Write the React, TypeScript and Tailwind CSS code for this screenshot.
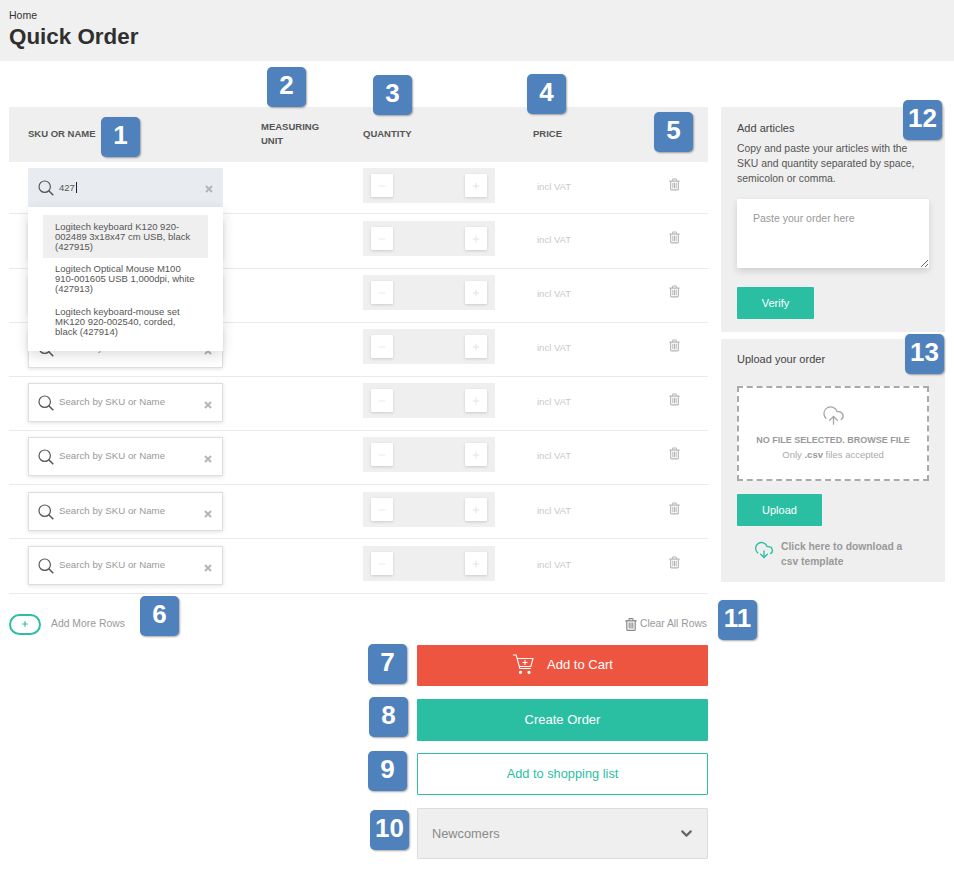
import { Fragment } from 'react'
import { ChevronDown, CloudDownload, CloudUpload, Minus, Plus } from 'lucide-react'

const rows = [
  { h: 'h-[52px] pt-[6px]', active: true },
  { h: 'h-[55px] pt-[7px]' },
  { h: 'h-[54px] pt-[6px]' },
  { h: 'h-[54px] pt-[6px]' },
  { h: 'h-[54px] pt-[6px]' },
  { h: 'h-[54px] pt-[6px]' },
  { h: 'h-[54px] pt-[7px]' },
  { h: 'h-[55px] pt-[7px]' },
]

const badges = [
  { n: '1', c: 'left-[101px] top-[117px]' },
  { n: '2', c: 'left-[267px] top-[67px]' },
  { n: '3', c: 'left-[373px] top-[75px]' },
  { n: '4', c: 'left-[527px] top-[74px]' },
  { n: '5', c: 'left-[654px] top-[112px]' },
  { n: '6', c: 'left-[140px] top-[596px]' },
  { n: '7', c: 'left-[368px] top-[644px]' },
  { n: '8', c: 'left-[369px] top-[697px]' },
  { n: '9', c: 'left-[368px] top-[751px]' },
  { n: '10', c: 'left-[370px] top-[810px]' },
  { n: '11', c: 'left-[718px] top-[600px]' },
  { n: '12', c: 'left-[903px] top-[100px]' },
  { n: '13', c: 'left-[905px] top-[334px]' },
]

const results = [
  { lines: ['Logitech keyboard K120 920-', '002489 3x18x47 cm USB, black', '(427915)'], c: 'bg-[#efefef] h-[43px] pt-[7px]' },
  { lines: ['Logitech Optical Mouse M100', '910-001605 USB 1,000dpi, white', '(427913)'], c: 'h-[43px] pt-[6px]' },
  { lines: ['Logitech keyboard-mouse set', 'MK120 920-002540, corded,', 'black (427914)'], c: 'h-[43px] pt-[6px]' },
]

function TrashIcon({ className }: { className: string }) {
  return (
    <svg viewBox="0 0 12 13" fill="none" stroke="currentColor" className={className}>
      <path d="M.3 2.8h11.4" strokeWidth="1.3" />
      <path d="M4 2.6V1.2c0-.4.2-.6.6-.6h2.8c.4 0 .6.2.6.6v1.4" strokeWidth="1.1" />
      <path d="M1.8 3v8.4c0 .6.4 1 1 1h6.4c.6 0 1-.4 1-1V3" strokeWidth="1.2" />
      <path d="M4.2 4.6v6M6 4.6v6M7.8 4.6v6" strokeWidth="1.1" />
    </svg>
  )
}

function SearchBox({ active }: { active?: boolean }) {
  return (
    <div className={active
      ? 'relative flex items-center w-[195px] h-[39px] pl-[10px] bg-[#e8ebef]'
      : 'relative flex items-center w-[195px] h-[39px] pl-[9px] bg-white border border-[#dedede] shadow-[0_1px_4px_rgba(0,0,0,0.12)]'}>
      <svg viewBox="0 0 16 16" fill="none" stroke="#555" strokeWidth="1.2" className="w-[16px] h-[16px] shrink-0">
        <circle cx="6.7" cy="6.7" r="5.7" />
        <path d="M10.8 10.8 15.3 15.3" strokeWidth="1.5" />
      </svg>
      {active
        ? <span className="ml-[5px] -mt-[1px] text-[9.5px] text-[#555] border-r border-[#222] pr-[1px] leading-[11px]">427</span>
        : <span className="ml-[5px] text-[9.7px] text-[#999]">Search by SKU or Name</span>}
      <span className="absolute right-[10px] top-[17px] text-[#b5b5b5]">
        <svg viewBox="0 0 8 8" stroke="currentColor" strokeWidth="2" className="w-[8px] h-[8px]">
          <path d="M1 1l6 6M7 1 1 7" />
        </svg>
      </span>
    </div>
  )
}

function QtyButton({ children }: { children: React.ReactNode }) {
  return (
    <div className="flex items-center justify-center w-[22px] h-[23px] bg-white rounded-[1px] shadow-[0_1px_3px_rgba(0,0,0,0.15)] text-[#e3e4e8]">
      {children}
    </div>
  )
}

function Row({ h, active }: { h: string; active?: boolean }) {
  return (
    <div className={`flex border-b border-[#eaeaea] ${h}`}>
      <div className="w-[252px] pl-[19px]">
        <SearchBox active={active} />
      </div>
      <div className="w-[102px]" />
      <div className="w-[170px]">
        <div className="flex items-center justify-between w-[132px] h-[35px] px-[8px] bg-[#efefef]">
          <QtyButton><Minus size={10} strokeWidth={2} /></QtyButton>
          <QtyButton><Plus size={10} strokeWidth={2.5} /></QtyButton>
        </div>
      </div>
      <div className="flex-1 flex justify-between pl-[4px] pr-[28px]">
        <span className="mt-[13px] text-[9.5px] leading-[11px] text-[#c8c8c8]">incl VAT</span>
        <TrashIcon className="w-[11px] h-[13px] mt-[10px] text-[#b4b4b4]" />
      </div>
    </div>
  )
}

export default function App() {
  return (
    <div className="relative w-[954px] h-[870px] overflow-hidden bg-white font-['Liberation_Sans',Arial,sans-serif] text-[#444]">
      <header className="h-[61px] bg-[#f0f0f0] px-[9px] pt-[9px]">
        <div className="text-[10.5px] leading-[12px] text-[#333]">Home</div>
        <h1 className="mt-[2px] text-[22.4px] leading-[28px] font-bold text-[#2f2f2f]">Quick Order</h1>
      </header>

      <main className="flex gap-[13px] px-[9px] pt-[46px]">
        <section className="w-[699px]">
          <div className="flex h-[55px] bg-[#efefef] text-[9.5px] font-bold text-[#555]">
            <div className="w-[252px] pl-[19px] self-center">SKU OR NAME</div>
            <div className="w-[102px] self-center leading-[14px] -mt-[1px]">MEASURING<br />UNIT</div>
            <div className="w-[170px] self-center">QUANTITY</div>
            <div className="self-center">PRICE</div>
          </div>

          <div className="relative">
            {rows.map((r, i) => <Row key={i} h={r.h} active={r.active} />)}

            <div className="absolute left-[19px] top-[45px] w-[195px] h-[144px] bg-white px-[15px] pt-[8px] shadow-[0_4px_12px_rgba(0,0,0,0.14)]">
              {results.map(item => (
                <div key={item.lines[0]} className={`pl-[12px] text-[9.5px] leading-[10px] whitespace-nowrap text-[#555] ${item.c}`}>
                  {item.lines.map((line, i) => <Fragment key={line}>{i > 0 && <br />}{line}</Fragment>)}
                </div>
              ))}
            </div>
          </div>

          <div className="flex items-center justify-between h-[51px] pt-[9px]">
            <div className="flex items-center">
              <div className="flex items-center justify-center w-[32px] h-[21px] rounded-full border-2 border-[#2abfa2] text-[#2abfa2]">
                <Plus size={8} strokeWidth={3.5} />
              </div>
              <span className="ml-[10px] text-[10.4px] text-[#999]">Add More Rows</span>
            </div>
            <div className="flex items-center text-[10.3px] text-[#999] pr-px">
              <TrashIcon className="w-[12px] h-[13px] mr-[3px] text-[#888]" />
              Clear All Rows
            </div>
          </div>

          <div className="ml-[408px] flex flex-col">
            <button className="flex items-center justify-center h-[41px] pb-[2px] bg-[#ee5541] rounded-[1px] text-white text-[13px]">
              <svg viewBox="0 0 22 21" fill="none" stroke="white" strokeWidth="1.1" className="w-[22px] h-[21px] mr-[13px]">
                <path d="M1 1h3.2l3.6 13.5h11" />
                <path d="M5 4.5h16l-2.2 8H7.2" />
                <path d="M13 6v5M10.5 8.5h5" />
                <circle cx="8.5" cy="18.3" r="1.1" fill="white" />
                <circle cx="17" cy="18.3" r="1.1" fill="white" />
              </svg>
              Add to Cart
            </button>
            <button className="mt-[13px] h-[42px] bg-[#2abfa2] rounded-[1px] text-white text-[13px]">Create Order</button>
            <button className="mt-[12px] h-[42px] bg-white border border-[#2abfa2] rounded-[1px] text-[#2abfa2] text-[12.8px]">Add to shopping list</button>
            <div className="mt-[13px] flex items-center justify-between h-[51px] pl-[14px] pr-[12px] bg-[#efefef] border border-[#dcdce0] rounded-[1px] text-[12.8px] text-[#8a8a8a]">
              Newcomers
              <ChevronDown size={17} strokeWidth={3} className="text-[#666]" />
            </div>
          </div>
        </section>

        <aside className="w-[224px] flex flex-col gap-[7px]">
          <div className="h-[225px] bg-[#efefef] rounded-[1px] px-[16px] pt-[15px]">
            <h2 className="text-[11px] leading-[13px] text-[#444]">Add articles</h2>
            <p className="mt-[6px] text-[10.4px] leading-[15px] text-[#555]">
              Copy and paste your articles with the SKU and quantity separated by space, semicolon or comma.
            </p>
            <textarea
              placeholder="Paste your order here"
              className="block w-[192px] h-[69px] mt-[13px] px-[16px] py-[13px] bg-white rounded-[1px] text-[10.5px] leading-[12px] outline-none shadow-[0_3px_7px_rgba(0,0,0,0.14)] placeholder:text-[#999]"
            />
            <button className="mt-[19px] w-[77px] h-[32px] bg-[#2abfa2] rounded-[1px] text-white text-[11px]">Verify</button>
          </div>

          <div className="h-[243px] bg-[#efefef] rounded-[1px] px-[16px] pt-[14px]">
            <h2 className="text-[11px] leading-[13px] text-[#444]">Upload your order</h2>
            <div className="flex flex-col items-center w-[192px] h-[95px] mt-[20px] pt-[16px] bg-white border-2 border-dashed border-[#aaa]">
              <CloudUpload size={23} strokeWidth={1.3} className="text-[#a5a5a5]" />
              <div className="mt-[7px] text-[9px] leading-[13px] font-bold text-[#999]">NO FILE SELECTED. BROWSE FILE</div>
              <div className="mt-[1px] text-[9.5px] leading-[13px] text-[#aaa]">Only <b className="text-[#999]">.csv</b> files accepted</div>
            </div>
            <button className="block mt-[13px] w-[85px] h-[32px] bg-[#2abfa2] rounded-[1px] text-white text-[11px]">Upload</button>
            <div className="flex mt-[13px] pl-[17px]">
              <CloudDownload size={20} strokeWidth={1.6} className="text-[#2abfa2] mt-[1px]" />
              <div className="ml-[7px] text-[10.3px] leading-[15px] font-bold text-[#999]">Click here to download a<br />csv template</div>
            </div>
          </div>
        </aside>
      </main>

      {badges.map(b => (
        <div
          key={b.n}
          className={`absolute ${b.c} flex items-center justify-center w-[39px] h-[40px] pb-[3px] rounded-[5px] bg-[#4f81bd] text-white text-[26px] font-bold shadow-[1px_1px_2px_rgba(0,0,0,0.35)]`}
        >
          {b.n}
        </div>
      ))}
    </div>
  )
}
